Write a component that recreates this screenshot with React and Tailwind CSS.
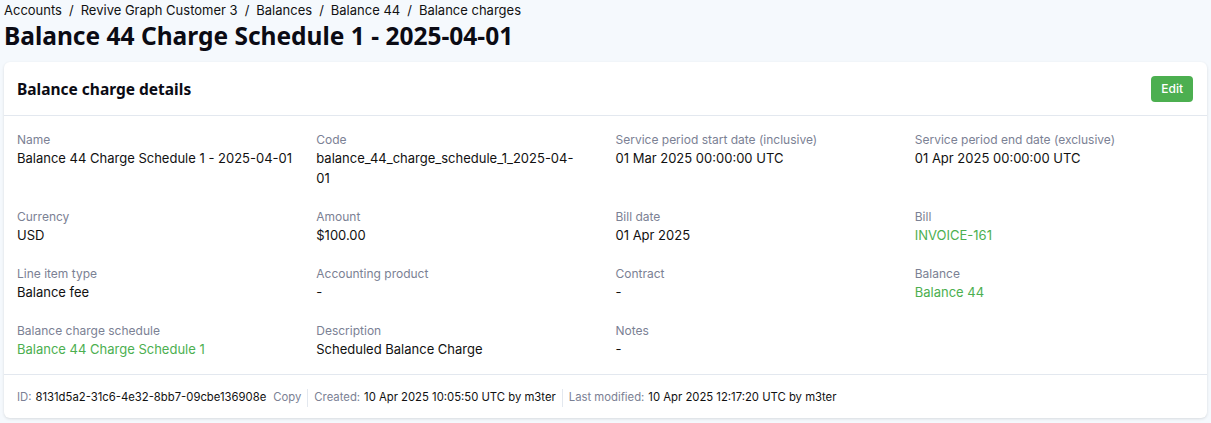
import React from 'react'

const body = { fontFamily: 'Inter, "Noto Sans", sans-serif' }

const fields = [
  [
    { label: 'Name', value: 'Balance 44 Charge Schedule 1 - 2025-04-01' },
    { label: 'Code', value: ['balance_44_charge_schedule_1_2025-04-', '01'] },
    { label: 'Service period start date (inclusive)', value: '01 Mar 2025 00:00:00 UTC' },
    { label: 'Service period end date (exclusive)', value: '01 Apr 2025 00:00:00 UTC' },
  ],
  [
    { label: 'Currency', value: 'USD' },
    { label: 'Amount', value: '$100.00' },
    { label: 'Bill date', value: '01 Apr 2025' },
    { label: 'Bill', value: 'INVOICE-161', link: true },
  ],
  [
    { label: 'Line item type', value: 'Balance fee' },
    { label: 'Accounting product', value: '-' },
    { label: 'Contract', value: '-' },
    { label: 'Balance', value: 'Balance 44', link: true },
  ],
  [
    { label: 'Balance charge schedule', value: 'Balance 44 Charge Schedule 1', link: true },
    { label: 'Description', value: 'Scheduled Balance Charge' },
    { label: 'Notes', value: '-' },
  ],
]

function Field({ label, value, link }) {
  const lines = Array.isArray(value) ? value : [value]
  return (
    <div className="min-w-0">
      <div className="text-[12px] leading-[16px] text-[#7b8194]">{label}</div>
      <div className={`text-[13px] leading-[20px] ${link ? 'text-[#4caf50]' : 'text-[#111111]'}`}>
        {lines.map((l) => (
          <div key={l}>{l}</div>
        ))}
      </div>
    </div>
  )
}

export default function App() {
  return (
    <div className="min-h-screen bg-[#f5f9fd] px-[4px] pb-[4px]" style={body}>
      <nav className="flex items-center pt-[1px] text-[13px] leading-[18px] text-[#111111]">
        {['Accounts', 'Revive Graph Customer 3', 'Balances', 'Balance 44', 'Balance charges'].map((c, i) => (
          <span key={c} className="flex items-center">
            {i > 0 && <span className="px-[7px]">/</span>}
            <span>{c}</span>
          </span>
        ))}
      </nav>
      <h1
        className="text-[24.5px] font-bold leading-[34px] text-[#0b0b14]"
        style={{ fontFamily: '"Noto Sans", sans-serif' }}
      >
        Balance 44 Charge Schedule 1 - 2025-04-01
      </h1>
      <div className="mt-[9px] rounded-[6px] bg-white shadow-[0_1px_3px_rgba(0,0,0,0.12)]">
        <div className="flex h-[54px] items-center justify-between border-b border-[#e3e8ef] pl-[13px] pr-[14px]">
          <h2
            className="pt-[2px] text-[15.5px] font-bold text-[#0b0b14]"
            style={{ fontFamily: '"Noto Sans", sans-serif' }}
          >
            Balance charge details
          </h2>
          <button className="h-[26px] rounded-[4px] bg-[#4caf50] px-[10px] text-[12px] font-medium text-white">
            Edit
          </button>
        </div>
        <div className="flex flex-col gap-[21px] px-[13px] pt-[16px] pb-[15px]">
          {fields.map((row, i) => (
            <div key={i} className="grid grid-cols-4 gap-x-[20px]">
              {row.map((f) => (
                <Field key={f.label} {...f} />
              ))}
            </div>
          ))}
        </div>
        <div className="flex h-[44px] items-center border-t border-[#e3e8ef] px-[13px] pt-[2px] text-[11.3px] text-[#111111]">
          <span className="text-[#7b8194]">ID:</span>
          <span className="ml-[4px]">8131d5a2-31c6-4e32-8bb7-09cbe136908e</span>
          <span className="ml-[7px] text-[#7b8194]">Copy</span>
          <span className="mx-[6px] h-[18px] w-px bg-[#e3e8ef]" />
          <span className="text-[#7b8194]">Created:</span>
          <span className="ml-[4px]">10 Apr 2025 10:05:50 UTC by m3ter</span>
          <span className="mx-[6px] h-[18px] w-px bg-[#e3e8ef]" />
          <span className="text-[#7b8194]">Last modified:</span>
          <span className="ml-[4px]">10 Apr 2025 12:17:20 UTC by m3ter</span>
        </div>
      </div>
    </div>
  )
}
